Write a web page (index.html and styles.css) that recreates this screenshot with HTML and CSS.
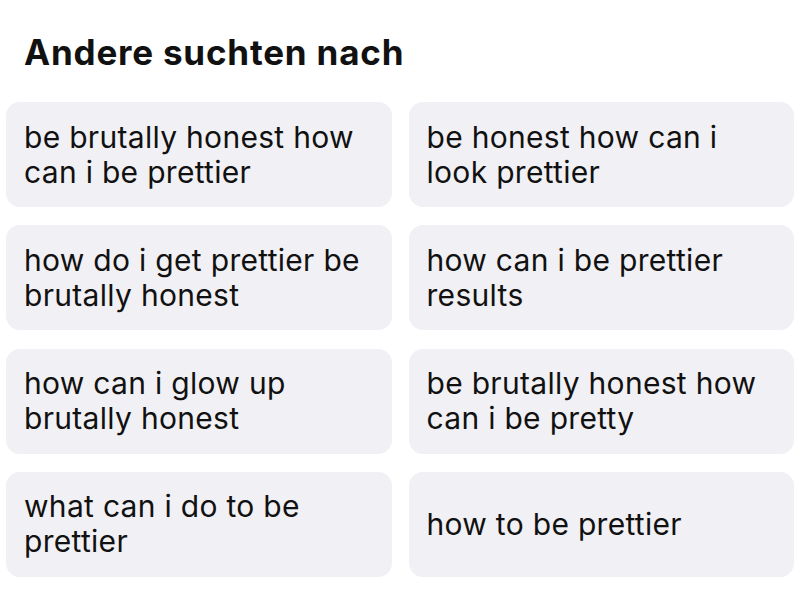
FILE: index.html
```html
<!DOCTYPE html>
<html>
<head>
<meta charset="utf-8">
<link rel="stylesheet" href="styles.css">
</head>
<body>
<div class="page">
  <h1 class="title">Andere suchten nach</h1>
  <div class="grid">
    <div class="card">be brutally honest how can i be prettier</div>
    <div class="card">be honest how can i look prettier</div>
    <div class="card">how do i get prettier be brutally honest</div>
    <div class="card">how can i be prettier results</div>
    <div class="card">how can i glow up brutally honest</div>
    <div class="card">be brutally honest how can i be pretty</div>
    <div class="card">what can i do to be prettier</div>
    <div class="card">how to be prettier</div>
  </div>
</div>
</body>
</html>
```

FILE: styles.css
```css
html, body {
  margin: 0;
  padding: 0;
  background: #ffffff;
}
.page {
  width: 800px;
  height: 600px;
  box-sizing: border-box;
  padding: 0 6px;
  font-family: "Inter", "Open Sans", sans-serif;
  color: #111111;
}
.title {
  margin: 0;
  padding: 30px 0 0 18px;
  height: 72px;
  box-sizing: border-box;
  font-size: 35px;
  line-height: 44px;
  font-weight: 700;
  letter-spacing: 0.8px;
}
.grid {
  display: grid;
  grid-template-columns: 1fr 1fr;
  grid-auto-rows: 105px;
  column-gap: 17px;
  row-gap: 18.3px;
  margin-top: 30px;
}
.card {
  background: #f1f0f4;
  border-radius: 14px;
  display: flex;
  align-items: center;
  padding: 0 18px;
  font-size: 30px;
  line-height: 35px;
  letter-spacing: 0.3px;
}
```
